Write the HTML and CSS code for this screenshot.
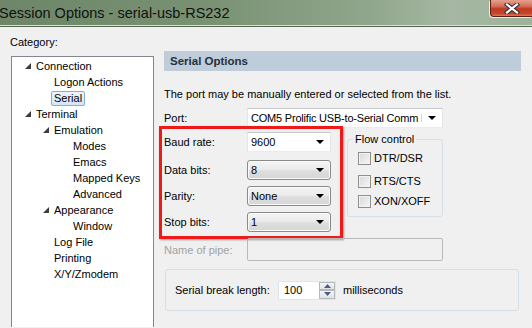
FILE: index.html
```html
<!DOCTYPE html>
<html lang="en">

<head>
    <meta charset="utf-8">
    <meta name="viewport" content="width=device-width, initial-scale=1.0">
    <title>Session Options - serial-usb-RS232</title>
    <link rel="stylesheet" href="styles.css">
</head>

<body>
    <div class="titlebar">
        <span class="title">Session Options - serial-usb-RS232</span>
        <span class="close">
            <svg width="16" height="11" viewBox="0 0 16 11">
                <path d="M3 1.5 L13 9.5 M13 1.5 L3 9.5" stroke="#33364a" stroke-width="4.4" stroke-linecap="square" fill="none"/>
                <path d="M3 1.5 L13 9.5 M13 1.5 L3 9.5" stroke="#fff" stroke-width="2.2" stroke-linecap="square" fill="none"/>
            </svg>
        </span>
    </div>

    <div class="dialog">
        <div class="left">
            <div class="cat-label">Category:</div>
            <ul class="tree">
                <li class="l0"><span class="tog"><svg width="6" height="6" viewBox="0 0 6 6"><polygon points="6,0 6,6 0,6" fill="#3c3c3c"/></svg></span>Connection</li>
                <li class="l1"><span class="tog"></span>Logon Actions</li>
                <li class="l1"><span class="tog"></span><span class="sel">Serial</span></li>
                <li class="l0"><span class="tog"><svg width="6" height="6" viewBox="0 0 6 6"><polygon points="6,0 6,6 0,6" fill="#3c3c3c"/></svg></span>Terminal</li>
                <li class="l1"><span class="tog"><svg width="6" height="6" viewBox="0 0 6 6"><polygon points="6,0 6,6 0,6" fill="#3c3c3c"/></svg></span>Emulation</li>
                <li class="l2"><span class="tog"></span>Modes</li>
                <li class="l2"><span class="tog"></span>Emacs</li>
                <li class="l2"><span class="tog"></span>Mapped Keys</li>
                <li class="l2"><span class="tog"></span>Advanced</li>
                <li class="l1"><span class="tog"><svg width="6" height="6" viewBox="0 0 6 6"><polygon points="6,0 6,6 0,6" fill="#3c3c3c"/></svg></span>Appearance</li>
                <li class="l2"><span class="tog"></span>Window</li>
                <li class="l1"><span class="tog"></span>Log File</li>
                <li class="l1"><span class="tog"></span>Printing</li>
                <li class="l1"><span class="tog"></span>X/Y/Zmodem</li>
            </ul>
        </div>

        <div class="right">
            <div class="panel-head">Serial Options</div>
            <p class="intro">The port may be manually entered or selected from the list.</p>

            <div class="row">
                <label>Port:</label>
                <div class="combo edit port">
                    <span class="val">COM5 Prolific USB-to-Serial Comm Port (COM5)</span>
                    <svg class="arrow" width="8" height="4" viewBox="0 0 8 4"><polygon points="0,0 8,0 4,4" fill="#000"/></svg>
                </div>
            </div>

            <div class="mid">
                <div class="highlight">
                    <div class="row r-baud">
                        <label>Baud rate:</label>
                        <div class="combo edit">
                            <span class="val">9600</span>
                            <svg class="arrow" width="8" height="4" viewBox="0 0 8 4"><polygon points="0,0 8,0 4,4" fill="#000"/></svg>
                        </div>
                    </div>
                    <div class="row r-data">
                        <label>Data bits:</label>
                        <div class="combo list">
                            <span class="val">8</span>
                            <svg class="arrow" width="8" height="4" viewBox="0 0 8 4"><polygon points="0,0 8,0 4,4" fill="#000"/></svg>
                        </div>
                    </div>
                    <div class="row r-next">
                        <label>Parity:</label>
                        <div class="combo list">
                            <span class="val">None</span>
                            <svg class="arrow" width="8" height="4" viewBox="0 0 8 4"><polygon points="0,0 8,0 4,4" fill="#000"/></svg>
                        </div>
                    </div>
                    <div class="row r-next">
                        <label>Stop bits:</label>
                        <div class="combo list">
                            <span class="val">1</span>
                            <svg class="arrow" width="8" height="4" viewBox="0 0 8 4"><polygon points="0,0 8,0 4,4" fill="#000"/></svg>
                        </div>
                    </div>
                </div>

                <fieldset class="flow">
                    <legend>Flow control</legend>
                    <div class="check c1"><span class="box"></span>DTR/DSR</div>
                    <div class="check c2"><span class="box"></span>RTS/CTS</div>
                    <div class="check c3"><span class="box"></span>XON/XOFF</div>
                </fieldset>
            </div>

            <div class="row pipe">
                <label>Name of pipe:</label>
                <div class="pipe-input"></div>
            </div>

            <div class="break-group">
                <span class="break-label">Serial break length:</span>
                <div class="spin">
                    <span class="val">100</span>
                    <div class="spin-btns">
                        <span class="sb"><svg width="7" height="4" viewBox="0 0 7 4"><polygon points="0,4 7,4 3.5,0" fill="#4a5f86"/></svg></span>
                        <span class="sb"><svg width="7" height="4" viewBox="0 0 7 4"><polygon points="0,0 7,0 3.5,4" fill="#4a5f86"/></svg></span>
                    </div>
                </div>
                <span class="ms">milliseconds</span>
            </div>
        </div>
    </div>
</body>

</html>
```

FILE: styles.css
```css
body {
    margin: 0;
    background-color: #f0f0f0;
    font-family: "Liberation Sans", Arial, sans-serif;
    font-size: 11px;
    color: #000;
    overflow: hidden;
    height: 328px;
}

/* title bar */

.titlebar {
    height: 25px;
    display: flex;
    align-items: flex-start;
    background: linear-gradient(90deg, #6c8667 0%, #7a9274 40%, #91a78d 70%, #a6b8a3 85%, #9db29a 100%);
    border-bottom: 1px solid #d9e2d7;
    box-shadow: 0 1px 0 #55654f;
}

.title {
    font-size: 14.5px;
    line-height: 26px;
    margin-left: -1px;
    color: #111;
}

.close {
    margin-left: auto;
    width: 41px;
    height: 16px;
    display: flex;
    align-items: center;
    justify-content: center;
    border: 1px solid #5b1d14;
    border-top: none;
    border-right: none;
    border-bottom-left-radius: 4px;
    background: linear-gradient(180deg, #e4a08e 0%, #d36e57 40%, #c0391f 55%, #c8472a 85%, #dc7a56 100%);
    box-shadow: -1px 1px 0 #e9eee7;
}

/* dialog body */

.dialog {
    display: flex;
    padding-left: 10px;
}

.left {
    width: 144px;
}

.cat-label {
    margin-top: 9px;
    line-height: 14px;
}

.tree {
    list-style: none;
    margin: 7px 0 0 1px;
    padding: 1px 0 0 0;
    height: 269px;
    background-color: #fff;
    border: 1px solid #828790;
    border-bottom: none;
}

.tree li {
    display: flex;
    align-items: center;
    height: 16px;
    line-height: 16px;
}

.tree .tog {
    width: 11px;
    display: flex;
    align-items: center;
}

.tree .l0 {
    padding-left: 13px;
}

.tree .l1 {
    padding-left: 31px;
}

.tree .l2 {
    padding-left: 50px;
}

.sel {
    margin-left: -3px;
    padding: 0 2px;
    line-height: 13px;
    border: 1px solid #84acdd;
    border-radius: 2px;
    background: linear-gradient(180deg, #eef5fd, #d3e5fb);
}

.right {
    margin-left: 10px;
    margin-top: 25px;
    width: 357px;
}

.panel-head {
    height: 20px;
    line-height: 20px;
    padding-left: 6px;
    background-color: #bfccd9;
    font-weight: bold;
    font-size: 11.5px;
    color: #25313d;
}

.intro {
    margin: 16px 0 0 0;
    line-height: 14px;
}

.row {
    display: flex;
    align-items: center;
    height: 20px;
    margin-top: 7px;
}

.row label {
    width: 83px;
}

/* combo boxes */

.combo {
    width: 84px;
    height: 20px;
    box-sizing: border-box;
    display: flex;
    align-items: center;
    padding-left: 3px;
}

.combo .val {
    flex: 1;
    overflow: hidden;
    white-space: nowrap;
}

.combo .arrow {
    margin: 0 6px 0 6px;
}

.combo.edit {
    background-color: #fff;
    border: 1px solid;
    border-color: #c5c8cc #e3e6ea #e8ebef #e3e6ea;
}

.combo.port {
    width: 196px;
}

.combo.port .val {
    max-width: 177px;
    letter-spacing: -0.2px;
}

.combo.list {
    border: 1px solid #8a8a8a;
    border-radius: 3px;
    background: linear-gradient(180deg, #f4f4f4 0%, #ececec 45%, #dedede 55%, #d6d6d6 100%);
    box-shadow: inset 0 0 0 1px #fafafa;
}

.mid {
    display: flex;
    align-items: flex-start;
    margin-top: -2px;
}

.highlight {
    margin-left: -5px;
    padding: 0 9px 4px 2px;
    border: 3px solid #ee1a1a;
    box-shadow: 1px 1px 2px rgba(0, 0, 0, 0.35);
}

.highlight .r-baud {
    margin-top: 3px;
}

.highlight .r-data {
    margin-top: 8px;
}

.highlight .r-next {
    margin-top: 6px;
}

/* flow control */

.flow {
    margin: 7px 0 0 4px;
    width: 96px;
    box-sizing: border-box;
    padding: 0 0 7px 10px;
    border: 1px solid #d5dfe5;
    border-radius: 3px;
}

.flow legend {
    margin-left: -5px;
    padding: 0 2px;
    line-height: 13px;
}

.check {
    display: flex;
    align-items: center;
    height: 16px;
}

.check.c1 {
    margin-top: 4px;
}

.check.c2 {
    margin-top: 7px;
}

.check.c3 {
    margin-top: 4px;
}

.check .box {
    width: 11px;
    height: 11px;
    margin-right: 3px;
    border: 1px solid #8e8f8f;
    background: linear-gradient(135deg, #d8d8d8, #f7f7f7);
    box-shadow: inset 0 0 0 1px #f2f2f2;
}

/* pipe */

.row.pipe {
    height: 23px;
    margin-top: -1px;
    color: #a3a3a3;
}

.pipe-input {
    width: 196px;
    height: 23px;
    box-sizing: border-box;
    border: 1px solid #b9b9b9;
    border-radius: 2px;
}

/* break length */

.break-group {
    margin: 8px 0 0 1px;
    width: 354px;
    height: 42px;
    box-sizing: border-box;
    display: flex;
    align-items: center;
    padding-left: 9px;
    border: 1px solid #d5dfe5;
    border-radius: 3px;
}

.break-label {
    width: 103px;
}

.spin {
    width: 58px;
    height: 19px;
    box-sizing: border-box;
    display: flex;
    align-items: center;
    background-color: #fff;
    border: 1px solid #e0e3e7;
    padding-left: 5px;
}

.spin .val {
    flex: 1;
}

.spin-btns {
    display: flex;
    flex-direction: column;
    width: 16px;
    height: 17px;
}

.sb {
    flex: 1;
    display: flex;
    align-items: center;
    justify-content: center;
    border: 1px solid #b4b8bf;
    background: linear-gradient(180deg, #f5f5f5, #e2e2e2);
}

.ms {
    margin-left: 7px;
}
```
